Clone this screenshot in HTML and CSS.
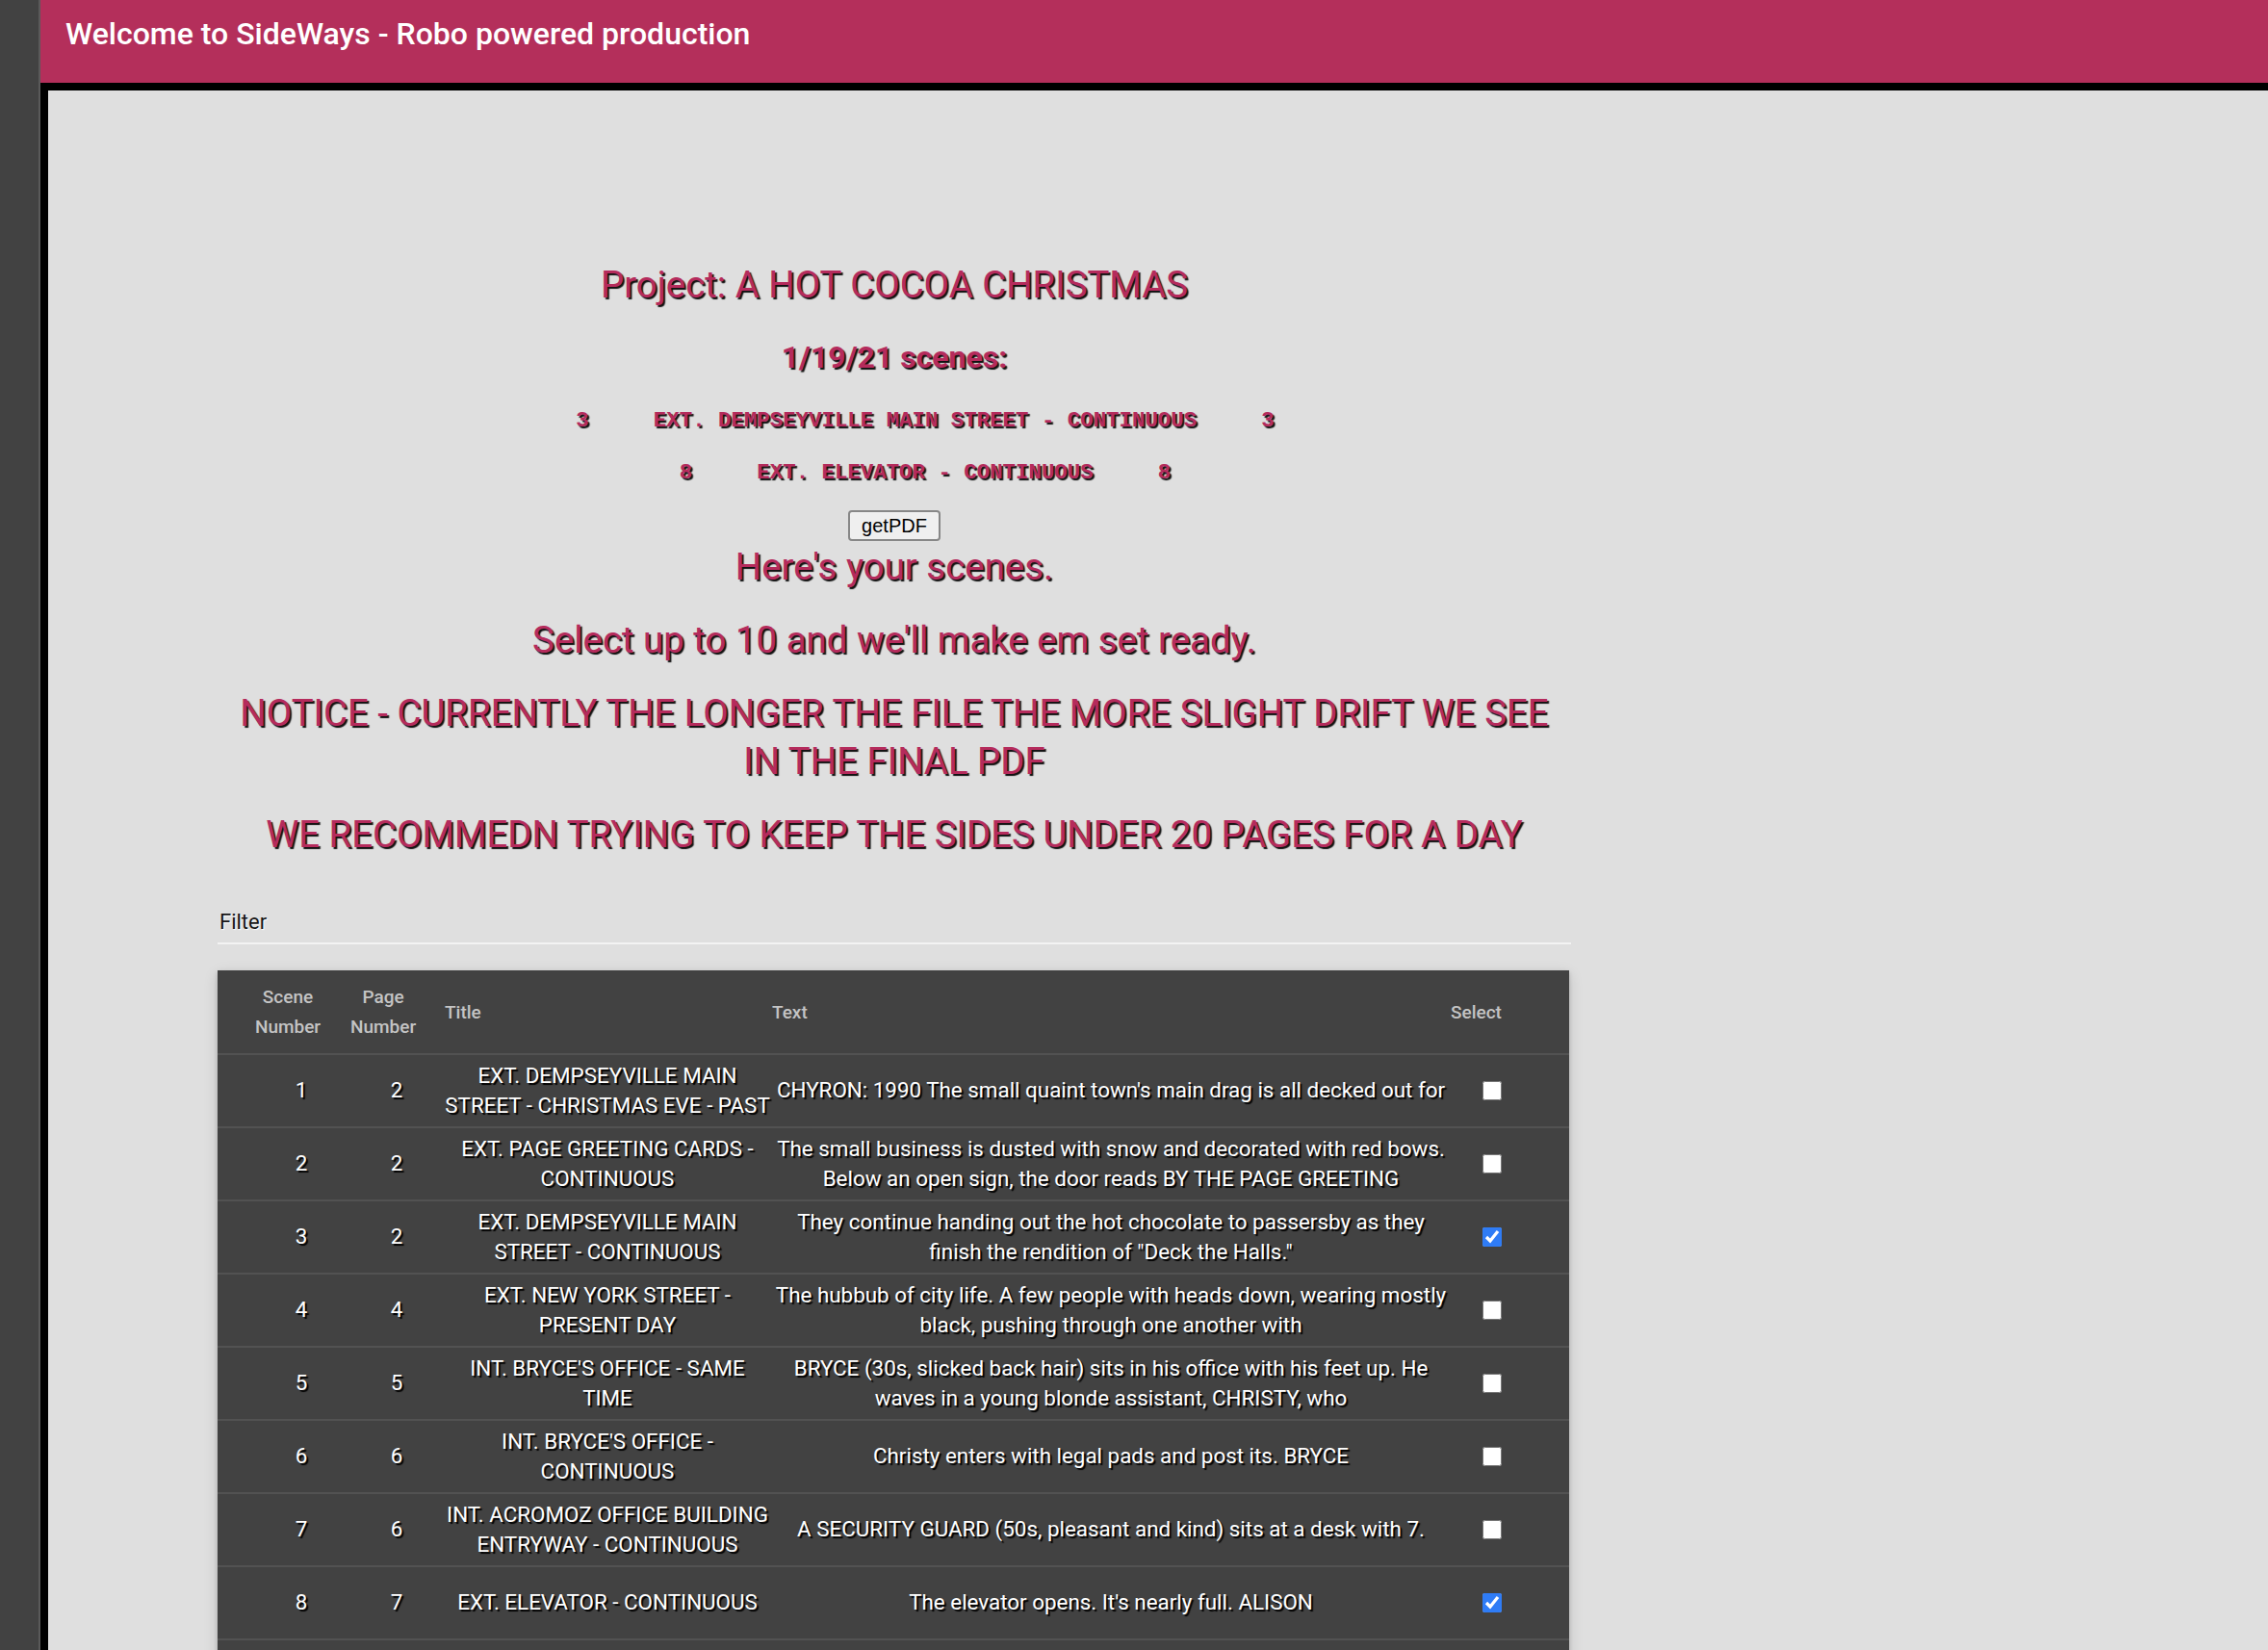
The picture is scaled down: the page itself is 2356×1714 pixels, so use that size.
FILE: index.html
```html
<!DOCTYPE html>
<html lang="en">
<head>
<meta charset="utf-8">
<title>SideWays</title>
<link rel="stylesheet" href="styles.css">
</head>
<body>
<div class="app">
  <aside class="rail"></aside>
  <div class="main">
    <header class="topbar">
      <h1 class="brand">Welcome to SideWays - Robo powered production</h1>
    </header>
    <main class="frame">
      <section class="content">
        <h2 class="project">Project: A HOT COCOA CHRISTMAS</h2>
        <h3 class="date">1/19/21 scenes:</h3>
        <pre class="slug slug-first">3     EXT. DEMPSEYVILLE MAIN STREET - CONTINUOUS     3</pre>
        <pre class="slug">8     EXT. ELEVATOR - CONTINUOUS     8</pre>
        <button class="pdf-btn" type="button">getPDF</button>
        <h2 class="msg msg-first">Here's your scenes.</h2>
        <h2 class="msg">Select up to 10 and we'll make em set ready.</h2>
        <h2 class="msg">NOTICE - CURRENTLY THE LONGER THE FILE THE MORE SLIGHT DRIFT WE SEE<br>IN THE FINAL PDF</h2>
        <h2 class="msg">WE RECOMMEDN TRYING TO KEEP THE SIDES UNDER 20 PAGES FOR A DAY</h2>

        <div class="filter">
          <label class="filter-label" for="filter">Filter</label>
          <input class="filter-input" id="filter" type="text">
        </div>

        <div class="paper">
          <table class="scenes">
            <colgroup>
              <col class="w-scene"><col class="w-page"><col class="w-title"><col class="w-text"><col class="w-select">
            </colgroup>
            <thead>
              <tr>
                <th class="h-scene">Scene<br>Number</th>
                <th class="h-page">Page<br>Number</th>
                <th class="h-title">Title</th>
                <th class="h-text">Text</th>
                <th class="h-select">Select</th>
              </tr>
            </thead>
            <tbody>
              <tr>
                <td class="c-scene">1</td><td class="c-page">2</td>
                <td class="c-title">EXT. DEMPSEYVILLE MAIN<br>STREET - CHRISTMAS EVE - PAST</td>
                <td class="c-text">CHYRON: 1990 The small quaint town's main drag is all decked out for</td>
                <td class="c-select"><input type="checkbox"></td>
              </tr>
              <tr>
                <td class="c-scene">2</td><td class="c-page">2</td>
                <td class="c-title">EXT. PAGE GREETING CARDS -<br>CONTINUOUS</td>
                <td class="c-text">The small business is dusted with snow and decorated with red bows.<br>Below an open sign, the door reads BY THE PAGE GREETING</td>
                <td class="c-select"><input type="checkbox"></td>
              </tr>
              <tr>
                <td class="c-scene">3</td><td class="c-page">2</td>
                <td class="c-title">EXT. DEMPSEYVILLE MAIN<br>STREET - CONTINUOUS</td>
                <td class="c-text">They continue handing out the hot chocolate to passersby as they<br>finish the rendition of "Deck the Halls."</td>
                <td class="c-select"><input type="checkbox" checked></td>
              </tr>
              <tr>
                <td class="c-scene">4</td><td class="c-page">4</td>
                <td class="c-title">EXT. NEW YORK STREET -<br>PRESENT DAY</td>
                <td class="c-text">The hubbub of city life. A few people with heads down, wearing mostly<br>black, pushing through one another with</td>
                <td class="c-select"><input type="checkbox"></td>
              </tr>
              <tr>
                <td class="c-scene">5</td><td class="c-page">5</td>
                <td class="c-title">INT. BRYCE'S OFFICE - SAME<br>TIME</td>
                <td class="c-text">BRYCE (30s, slicked back hair) sits in his office with his feet up. He<br>waves in a young blonde assistant, CHRISTY, who</td>
                <td class="c-select"><input type="checkbox"></td>
              </tr>
              <tr>
                <td class="c-scene">6</td><td class="c-page">6</td>
                <td class="c-title">INT. BRYCE'S OFFICE -<br>CONTINUOUS</td>
                <td class="c-text">Christy enters with legal pads and post its. BRYCE</td>
                <td class="c-select"><input type="checkbox"></td>
              </tr>
              <tr>
                <td class="c-scene">7</td><td class="c-page">6</td>
                <td class="c-title">INT. ACROMOZ OFFICE BUILDING<br>ENTRYWAY - CONTINUOUS</td>
                <td class="c-text">A SECURITY GUARD (50s, pleasant and kind) sits at a desk with 7.</td>
                <td class="c-select"><input type="checkbox"></td>
              </tr>
              <tr>
                <td class="c-scene">8</td><td class="c-page">7</td>
                <td class="c-title">EXT. ELEVATOR - CONTINUOUS</td>
                <td class="c-text">The elevator opens. It's nearly full. ALISON</td>
                <td class="c-select"><input type="checkbox" checked></td>
              </tr>
              <tr>
                <td class="c-scene"></td><td class="c-page"></td>
                <td class="c-title"></td>
                <td class="c-text"></td>
                <td class="c-select"><input type="checkbox"></td>
              </tr>
            </tbody>
          </table>
        </div>
      </section>
    </main>
  </div>
</div>
</body>
</html>
```

FILE: styles.css
```css
html, body {
  margin: 0;
  padding: 0;
  background: #dfdfdf;
  font-family: Roboto, "Noto Sans", Arial, sans-serif;
}

.app {
  display: flex;
  min-height: 100vh;
}

.rail {
  width: 40px;
  flex: 0 0 40px;
  background: #424242;
  border-right: 2px solid #5a5a5a;
}

.main {
  flex: 1;
  display: flex;
  flex-direction: column;
  min-width: 0;
}

.topbar {
  height: 86px;
  background: #b42f5b;
  box-sizing: border-box;
  padding: 15px 0 0 26px;
}

.brand {
  margin: 0;
  font-size: 32px;
  line-height: 40px;
  font-weight: 500;
  color: #ffffff;
}

.frame {
  flex: 1;
  background: #dfdfdf;
  border-top: 8px solid #000;
  border-left: 8px solid #000;
}

.content {
  width: 1406px;
  margin-left: 176px;
  padding-top: 177px;
  display: flex;
  flex-direction: column;
  align-items: center;
}

.project,
.msg {
  margin: 0;
  font-size: 38.4px;
  line-height: 50px;
  font-weight: 400;
  color: #b52b5c;
  text-shadow: 2px 2px 1px #111;
  text-align: center;
}

.date {
  margin: 28px 0 0;
  font-size: 32px;
  line-height: 44px;
  font-weight: 700;
  color: #b52b5c;
  text-shadow: 2px 2px 1px #111;
}

.slug {
  margin: 24px 0 0 64px;
  font-family: "Liberation Mono", "Courier New", monospace;
  font-weight: 700;
  font-size: 22.4px;
  line-height: 30px;
  color: #b52b5c;
  text-shadow: 2px 2px 1px #111;
  white-space: pre;
}

.slug-first {
  margin-top: 29px;
}

.pdf-btn {
  margin-top: 24px;
  height: 32px;
  padding: 0 12px;
  font-family: "Liberation Sans", Arial, sans-serif;
  font-size: 20px;
  color: #000;
  background: #efefef;
  border: 2px solid #878787;
  border-radius: 4px;
}

.msg {
  margin-top: 26px;
}

.msg-first {
  margin-top: 2px;
}

.filter {
  align-self: stretch;
  margin-top: 54px;
  display: flex;
  flex-direction: column;
}

.filter-label {
  padding-left: 2px;
  font-size: 22px;
  line-height: 24px;
  color: #161616;
  text-shadow: 1px 1px 1px rgba(255, 255, 255, 0.9);
}

.filter-input {
  height: 9px;
  padding: 0;
  margin: 0;
  border: none;
  border-bottom: 2px solid #f3f3f3;
  background: transparent;
  outline: none;
}

.paper {
  align-self: flex-start;
  margin-top: 27px;
  width: 1404px;
  background: #424242;
  box-shadow: 0 2px 4px rgba(0, 0, 0, 0.18), 0 4px 14px rgba(0, 0, 0, 0.14);
}

.scenes {
  width: 1404px;
  table-layout: fixed;
  border-collapse: collapse;
}

.w-scene { width: 138px; }
.w-page { width: 91px; }
.w-title { width: 347px; }
.w-text { width: 701px; }
.w-select { width: 127px; }

.scenes th {
  height: 86px;
  padding: 0;
  font-size: 19px;
  line-height: 31px;
  font-weight: 500;
  color: #c4c4c4;
  text-align: left;
  vertical-align: middle;
  border-bottom: 2px solid #525252;
}

.scenes th.h-scene { text-align: center; padding-left: 8px; }
.scenes th.h-page { text-align: center; padding-right: 23px; }
.scenes th.h-title { padding-left: 7px; }
.scenes th.h-text { padding-left: 0; }
.scenes th.h-select { padding-left: 4px; }

.scenes td {
  height: 74px;
  padding: 0;
  font-size: 22.4px;
  line-height: 31.5px;
  color: #ffffff;
  text-shadow: 2px 2px 1px #000;
  text-align: center;
  vertical-align: middle;
  border-bottom: 2px solid #525252;
  white-space: nowrap;
}

.scenes td.c-scene { padding-left: 36px; }
.scenes td.c-page { padding-left: 5px; }
.scenes td.c-title { padding-left: 5px; }
.scenes td.c-text { padding-left: 3px; }
.scenes td.c-select { text-align: left; padding-left: 37px; }

.c-select input {
  display: block;
  width: 20px;
  height: 20px;
  margin: 0;
  accent-color: #2f7cf6;
}
```
